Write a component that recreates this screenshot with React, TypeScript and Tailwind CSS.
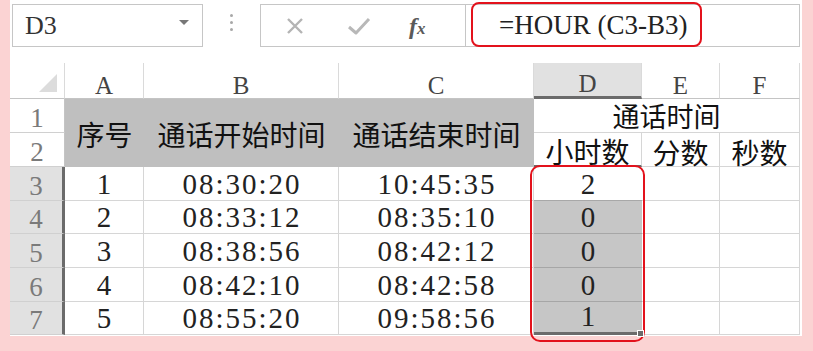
import React from 'react';

const serif = "font-['Liberation_Serif',serif]";
const cjk = "font-['Noto_Sans_CJK_SC',sans-serif]";

const rows = [
  { n: '1', start: '08:30:20', end: '10:45:35', hour: '2' },
  { n: '2', start: '08:33:12', end: '08:35:10', hour: '0' },
  { n: '3', start: '08:38:56', end: '08:42:12', hour: '0' },
  { n: '4', start: '08:42:10', end: '08:42:58', hour: '0' },
  { n: '5', start: '08:55:20', end: '09:58:56', hour: '1' },
];

const Num: React.FC<{ children: React.ReactNode; wide?: boolean }> = ({ children, wide }) => (
  <span className={`${serif} text-[29px] leading-none text-[#222] tabular-nums ${wide ? 'tracking-[2px] pl-[2px]' : ''}`}>
    {children}
  </span>
);

const ColHead: React.FC<{ label: string; active?: boolean }> = ({ label, active }) => (
  <div
    className={`flex items-end justify-center border-r border-[#dadada] ${
      active ? 'bg-[#e1e1e1] border-b-[3px] border-b-[#6b6b6b]' : 'bg-white border-b border-b-[#c4c4c4]'
    }`}
  >
    <span className={`${serif} text-[25px] leading-none text-[#444]`}>{label}</span>
  </div>
);

const RowHead: React.FC<{ label: string; active?: boolean }> = ({ label, active }) => (
  <div
    className={`flex items-end justify-center border-b border-[#d0d0d0] ${
      active ? 'bg-[#e1e1e1] border-r-[3px] border-r-[#6b6b6b]' : 'bg-white border-r border-r-[#c4c4c4]'
    }`}
  >
    <span className={`${serif} text-[27px] leading-none text-[#7a7a7a]`}>{label}</span>
  </div>
);

export default function App() {
  return (
    <div className="relative w-[813px] h-[351px] bg-[#fbd3d3] overflow-hidden">
      <div className="ml-[10px] w-[792px] h-[336px] bg-white">
        {/* formula bar */}
        <div className="flex items-start h-[63px] pt-[4px]">
          <div className="ml-[2px] w-[191px] h-[43px] border border-[#c6c6c6] flex items-center justify-between pl-[12px] pr-[13px]">
            <span className={`${serif} text-[26px] leading-none text-[#333]`}>D3</span>
            <span className="w-0 h-0 border-l-[5px] border-r-[5px] border-t-[5px] border-l-transparent border-r-transparent border-t-[#777] mb-[6px]" />
          </div>
          <div className="w-[57px] h-[43px] flex flex-col items-center justify-center gap-[4px] pb-[6px]">
            <span className="w-[3px] h-[3px] rounded-full bg-[#a8a8a8]" />
            <span className="w-[3px] h-[3px] rounded-full bg-[#a8a8a8]" />
            <span className="w-[3px] h-[3px] rounded-full bg-[#a8a8a8]" />
          </div>
          <div className="w-[540px] h-[43px] border border-[#c6c6c6] flex items-stretch">
            <div className="w-[205px] flex items-center border-r border-[#c6c6c6]">
              <svg className="ml-[24px]" width="20" height="20" viewBox="0 0 20 20">
                <path d="M3 3 L17 17 M17 3 L3 17" stroke="#b4b4b4" strokeWidth="2.4" fill="none" />
              </svg>
              <svg className="ml-[42px]" width="24" height="20" viewBox="0 0 24 20">
                <path d="M2 11 L9 17 L22 3" stroke="#b8b8b8" strokeWidth="3" fill="none" strokeLinejoin="round" />
              </svg>
              <span className={`ml-[38px] ${serif} italic font-bold text-[24px] text-[#5a5a5a] leading-none`}>
                f<span className="text-[17px]">x</span>
              </span>
            </div>
            <div className="flex items-center pl-[33px]">
              <span className={`${serif} text-[27px] leading-none text-[#222]`}>=HOUR (C3-B3)</span>
            </div>
          </div>
        </div>

        {/* sheet grid */}
        <div className="grid grid-cols-[55px_79px_195px_195px_108px_78px_80px] grid-rows-[36px_34px_34px_34px_33px_34px_34px_33px]">
          <div className="relative bg-white border-r border-[#dadada] border-b border-b-[#c4c4c4]">
            <svg className="absolute right-[7px] bottom-[6px]" width="18" height="18" viewBox="0 0 18 18">
              <path d="M18 0 L18 18 L0 18 Z" fill="#dcdcdc" />
            </svg>
          </div>
          <ColHead label="A" />
          <ColHead label="B" />
          <ColHead label="C" />
          <ColHead label="D" active />
          <ColHead label="E" />
          <ColHead label="F" />

          {/* row 1 */}
          <RowHead label="1" />
          <div className={`row-span-2 bg-[#bfbfbf] flex items-center justify-center ${cjk} text-[28px] text-[#111] pt-[2px]`}>序号</div>
          <div className={`row-span-2 bg-[#bfbfbf] flex items-center justify-center ${cjk} text-[28px] text-[#111] pt-[2px]`}>通话开始时间</div>
          <div className={`row-span-2 bg-[#bfbfbf] flex items-center justify-center ${cjk} text-[28px] text-[#111] pt-[2px]`}>通话结束时间</div>
          <div className={`col-span-3 border-b border-r border-[#d6d6d6] flex items-center justify-center ${cjk} text-[27px] leading-none text-[#111]`}>通话时间</div>

          {/* row 2 */}
          <RowHead label="2" />
          <div className={`border-r border-[#d6d6d6] border-b-[2px] border-b-[#6b6b6b] flex items-end justify-center ${cjk} text-[28px] leading-none text-[#111]`}>小时数</div>
          <div className={`border-r border-b border-[#d6d6d6] flex items-end justify-center ${cjk} text-[28px] leading-none text-[#111]`}>分数</div>
          <div className={`border-r border-b border-[#d6d6d6] flex items-end justify-center ${cjk} text-[28px] leading-none text-[#111]`}>秒数</div>

          {rows.map((r, i) => (
            <React.Fragment key={r.n}>
              <RowHead label={String(i + 3)} active />
              <div className="border-r border-b border-[#d6d6d6] flex items-end justify-center pb-[1px]"><Num>{r.n}</Num></div>
              <div className="border-r border-b border-[#d6d6d6] flex items-end justify-center pb-[1px]"><Num wide>{r.start}</Num></div>
              <div className="border-r border-b border-[#d6d6d6] flex items-end justify-center pb-[1px]"><Num wide>{r.end}</Num></div>
              <div
                className={`flex items-end justify-center pb-[1px] ${
                  i === 0 ? 'bg-white border-b border-[#a8a8a8]' : 'bg-[#c6c6c6] border-b border-[#a6a6a6]'
                } ${i === rows.length - 1 ? 'border-b-[3px] border-b-[#6b6b6b]' : ''}`}
              >
                <Num>{r.hour}</Num>
              </div>
              <div className="border-r border-b border-[#d6d6d6]" />
              <div className="border-r border-b border-[#d6d6d6]" />
            </React.Fragment>
          ))}
        </div>
      </div>

      {/* red highlight rings */}
      <div className="absolute left-[471px] top-[2px] w-[231px] h-[45px] border-[2.5px] border-[#e3121c] rounded-[8px]" />
      <div className="absolute left-[530px] top-[165px] w-[115px] h-[177px] border-[2.5px] border-[#e3121c] rounded-[10px]" />
      <div className="absolute left-[637px] top-[330px] w-[7px] h-[7px] bg-[#6b6b6b] border border-white" />
    </div>
  );
}
